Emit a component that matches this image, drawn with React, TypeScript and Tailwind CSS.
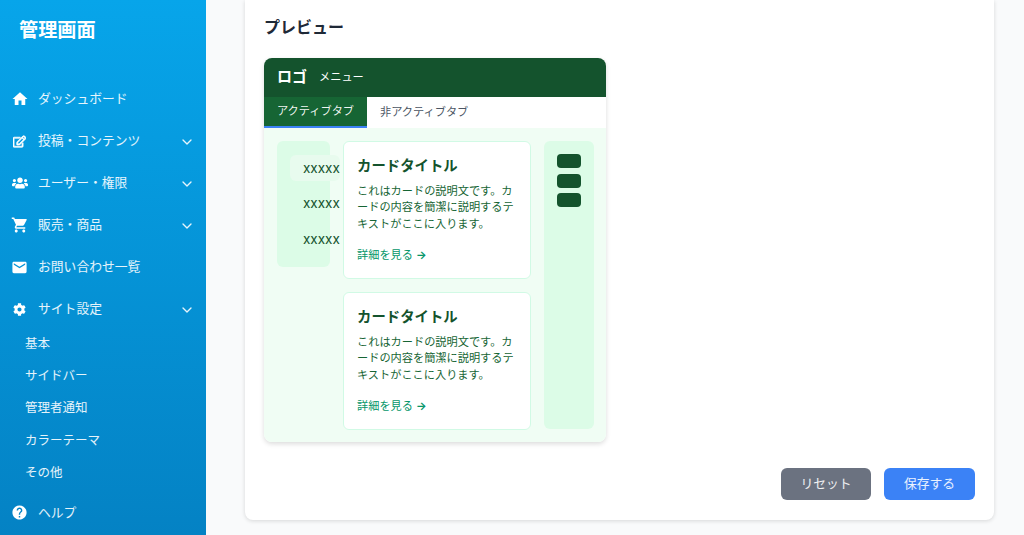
import { ChevronDown } from "lucide-react";
import { FaRegEdit, FaUsers, FaCog } from "react-icons/fa";
import { MdHome, MdShoppingCart, MdEmail, MdHelp } from "react-icons/md";

const font = { fontFamily: '"Inter", "Noto Sans CJK JP", sans-serif' };

const navTop = [
  { label: "ダッシュボード", Icon: MdHome, iconClass: "h-[18px] w-[18px]" },
  { label: "投稿・コンテンツ", Icon: FaRegEdit, iconClass: "h-[13px] w-[13px] stroke-current stroke-[30]", sub: true },
  { label: "ユーザー・権限", Icon: FaUsers, iconClass: "h-[16px] w-[16px]", sub: true },
  { label: "販売・商品", Icon: MdShoppingCart, iconClass: "h-[18px] w-[18px]", sub: true },
  { label: "お問い合わせ一覧", Icon: MdEmail, iconClass: "h-[17px] w-[17px]" },
  { label: "サイト設定", Icon: FaCog, iconClass: "h-[13px] w-[13px]", sub: true },
];

const subNav = ["基本", "サイドバー", "管理者通知", "カラーテーマ", "その他"];

type NavItemProps = { label: string; Icon: React.ElementType; iconClass: string; sub?: boolean };

function NavItem({ label, Icon, iconClass, sub }: NavItemProps) {
  return (
    <div className="flex h-[42px] items-center pl-[12px] pr-[11px] text-[12.8px] text-white/90">
      <span className="flex h-[15px] w-[15px] shrink-0 items-center justify-center">
        <Icon className={`${iconClass} shrink-0 text-white`} />
      </span>
      <span className="ml-[11px] flex-1">{label}</span>
      {sub && <ChevronDown className="mt-[2px] h-[16px] w-[16px] text-white/90" strokeWidth={2} />}
    </div>
  );
}

function Card() {
  return (
    <div className="h-[138px] rounded-md border border-[#d1fae5] bg-white px-[13px] pt-[13px]">
      <h3 className="text-[14.4px] leading-[22px] font-bold text-[#14532d]">カードタイトル</h3>
      <p className="mt-[5.6px] text-[11.2px] leading-[16.8px] text-[#166534]">
        これはカードの説明文です。カードの内容を簡潔に説明するテキストがここに入ります。
      </p>
      <a className="mt-[14.5px] block text-[11.2px] leading-[17px] text-[#059669]">
        詳細を見る <span className="font-bold">→</span>
      </a>
    </div>
  );
}

export default function App() {
  return (
    <div className="flex h-[535px] w-[1024px] overflow-hidden bg-[#f9fafb]" style={font}>
      <aside className="w-[206px] shrink-0 bg-gradient-to-b from-[#07a5ea] to-[#0482c4]">
        <h1 className="pl-[19px] pt-[16px] text-[19.2px] leading-[28px] font-bold text-white">管理画面</h1>
        <nav className="mt-[34px]">
          {navTop.map((item) => (
            <NavItem key={item.label} {...item} />
          ))}
          <ul className="mt-[-2px] pl-[25px] text-[12.5px] text-white/90">
            {subNav.map((s) => (
              <li key={s} className="flex h-[32.3px] items-center">
                {s}
              </li>
            ))}
          </ul>
          <div className="mt-[2px]">
            <NavItem label="ヘルプ" Icon={MdHelp} iconClass="h-[17px] w-[17px]" />
          </div>
        </nav>
      </aside>

      <main className="flex-1 pl-[39px] pr-[30px]">
        <section className="flex h-[520px] flex-col rounded-b-lg bg-white px-[19px] pt-[15px] shadow-[0_1px_4px_rgba(0,0,0,0.14)]">
          <h2 className="text-[16px] leading-[24px] font-bold text-[#1f2937]">プレビュー</h2>

          <div className="mt-[19px] w-[342px] overflow-hidden rounded-lg shadow-[0_2px_5px_rgba(0,0,0,0.14)]">
            <header className="flex h-[39px] items-center gap-[12px] bg-[#14532d] px-[13px] text-white">
              <span className="text-[15px] font-bold">ロゴ</span>
              <span className="text-[11.2px]">メニュー</span>
            </header>
            <div className="flex h-[31px] bg-white text-[11.2px]">
              <div className="flex w-[103px] items-center justify-center border-b-2 border-[#3b82f6] bg-[#166534] text-white/95">
                アクティブタブ
              </div>
              <div className="flex items-center px-[13px] text-[#4b5563]">非アクティブタブ</div>
            </div>
            <div className="flex h-[314px] items-start gap-[13px] bg-[#f0fdf4] p-[13px]">
              <div className="h-[126px] w-[53px] shrink-0 rounded-md bg-[#dcfce7] pl-[13px] pt-[14px] text-[13.5px] text-[#14532d]">
                <div className="flex h-[26px] w-[50px] items-center rounded-md bg-[#e8fbee] pl-[13px]">xxxxx</div>
                <div className="mt-[9.5px] flex h-[26px] items-center pl-[13px]">xxxxx</div>
                <div className="mt-[9.5px] flex h-[26px] items-center pl-[13px]">xxxxx</div>
              </div>
              <div className="flex w-[188px] shrink-0 flex-col gap-[13px]">
                <Card />
                <Card />
              </div>
              <div className="flex h-[288px] w-[50px] shrink-0 flex-col items-center gap-[5.5px] rounded-md bg-[#dcfce7] pt-[13px]">
                <div className="h-[14px] w-[24px] rounded bg-[#14532d]" />
                <div className="h-[14px] w-[24px] rounded bg-[#14532d]" />
                <div className="h-[14px] w-[24px] rounded bg-[#14532d]" />
              </div>
            </div>
          </div>

          <div className="mt-[26px] flex justify-end gap-[13px]">
            <button className="h-[32px] w-[90px] rounded-md bg-[#6b7280] text-[12.8px] text-white/90">リセット</button>
            <button className="h-[32px] w-[91px] rounded-md bg-[#3b82f6] text-[12.8px] text-white/90">保存する</button>
          </div>
        </section>
      </main>
    </div>
  );
}
